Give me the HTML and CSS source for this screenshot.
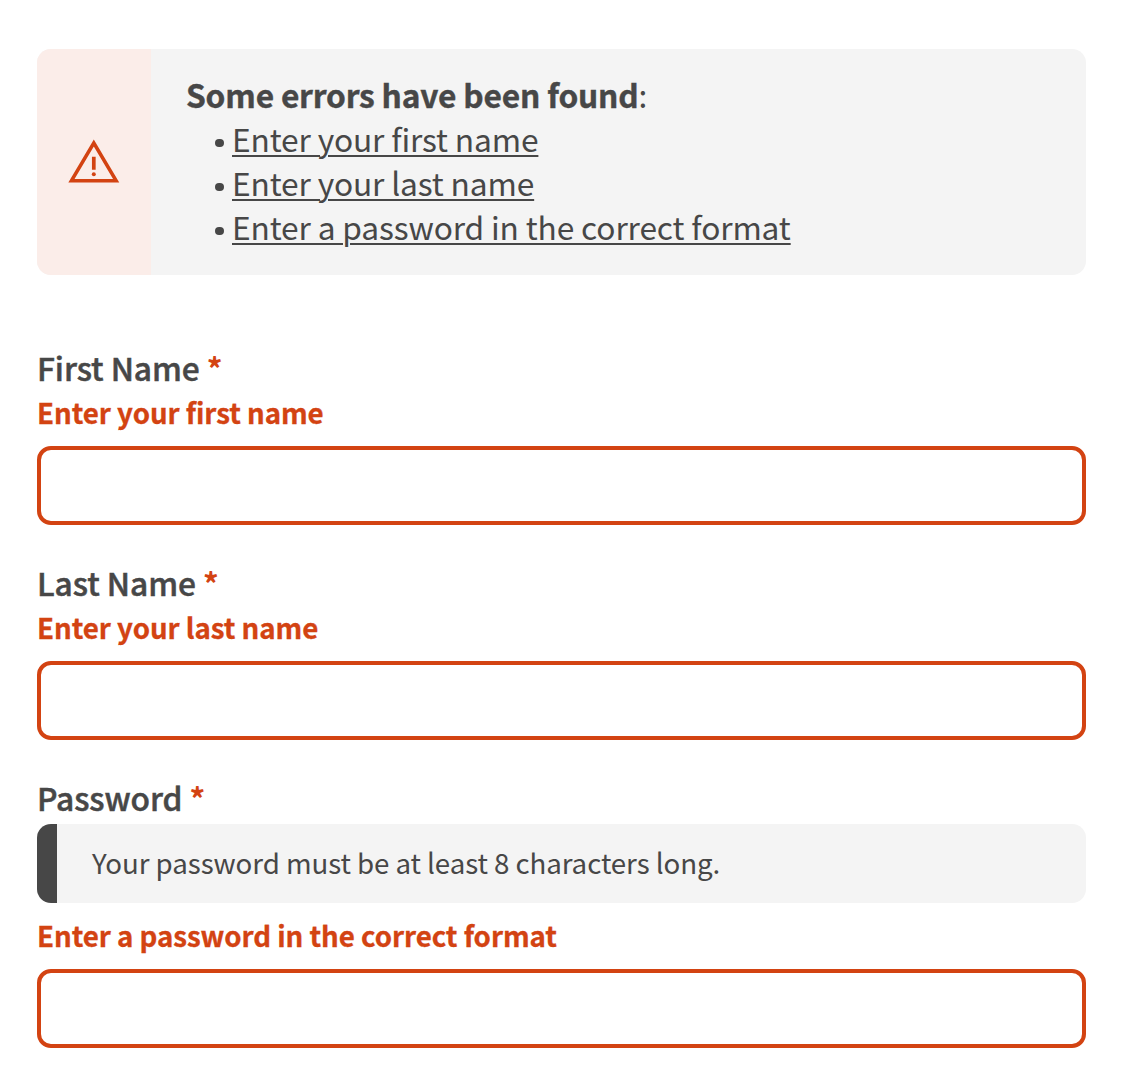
FILE: index.html
```
<!DOCTYPE html>
<html lang="en">
<head>
<meta charset="utf-8">
<title>Form errors</title>
<link rel="stylesheet" href="styles.css">
</head>
<body>
<main class="page">
  <section class="alert" role="alert">
    <div class="alert-icon">
      <svg width="52" height="46" viewBox="0 0 52 46" fill="none" aria-hidden="true">
        <path d="M25.8 4 48.2 41.8H3.4Z" stroke="currentColor" stroke-width="3.5"/>
        <path d="M25.8 17.8v13" stroke="currentColor" stroke-width="3.7"/>
        <circle cx="25.8" cy="35.3" r="2" fill="currentColor"/>
      </svg>
    </div>
    <div class="alert-body">
      <p class="alert-title"><strong>Some errors have been found</strong>:</p>
      <ul class="alert-list">
        <li><a href="#first">Enter your first name</a></li>
        <li><a href="#last">Enter your last name</a></li>
        <li><a href="#password">Enter a password in the correct format</a></li>
      </ul>
    </div>
  </section>
  <form class="form">
    <div class="field">
      <label class="label" for="first">First Name <span class="required">*</span></label>
      <p class="error">Enter your first name</p>
      <input class="input" id="first" type="text">
    </div>
    <div class="field">
      <label class="label" for="last">Last Name <span class="required">*</span></label>
      <p class="error">Enter your last name</p>
      <input class="input" id="last" type="text">
    </div>
    <div class="field">
      <label class="label" for="password">Password <span class="required">*</span></label>
      <p class="hint">Your password must be at least 8 characters long.</p>
      <p class="error">Enter a password in the correct format</p>
      <input class="input" id="password" type="password">
    </div>
  </form>
</main>
</body>
</html>
```
FILE: styles.css
```
* { box-sizing: border-box; margin: 0; padding: 0; }
body {
  background: #fff;
  color: #474747;
  font-family: "Noto Sans CJK SC", "Noto Sans", sans-serif;
  font-size: 31.7px;
  line-height: 44px;
  letter-spacing: -0.004em;
}
.page { padding: 49px 52px 38px 37px; }
.alert {
  display: flex;
  height: 226px;
  border-radius: 14px;
  overflow: hidden;
  background: #f4f4f4;
}
.alert-icon {
  display: flex;
  align-items: center;
  justify-content: center;
  width: 114px;
  background: #fbede9;
  color: #d34312;
}
.alert-body { padding: 23px 0 0 35px; }
.alert-title { letter-spacing: -0.0055em; }
.alert-title strong { -webkit-text-stroke: 0.4px currentColor; }
.alert-list { list-style: none; padding-left: 29px; }
.alert-list li { display: flex; align-items: center; }
.alert-list li::before {
  content: "";
  width: 8.5px;
  height: 8.5px;
  margin: 10px 8.5px 0 0;
  border-radius: 50%;
  background: currentColor;
}
.alert-list a { color: inherit; text-underline-offset: 3px; text-decoration-thickness: 2px; }
.form { padding-top: 70px; }
.field + .field { margin-top: 35px; }
.label {
  display: block;
  height: 46px;
  font-weight: 500;
  letter-spacing: -0.002em;
  -webkit-text-stroke: 0.5px currentColor;
}
.required { color: #d34312; font-weight: 700; font-size: 31px; -webkit-text-stroke: 0; }
.error {
  height: 55px;
  color: #d34312;
  font-size: 27.7px;
  font-weight: 700;
  line-height: 43px;
  letter-spacing: -0.002em;
  -webkit-text-stroke: 0.3px currentColor;
}
.hint {
  height: 79px;
  margin: 3px 0 11px;
  padding: 16px 0 0 35px;
  border-left: 20px solid #474747;
  border-radius: 14px;
  background: #f4f4f4;
  font-size: 27.7px;
  letter-spacing: -0.0025em;
}
.input {
  display: block;
  width: 100%;
  height: 79px;
  border: 4px solid #d34312;
  border-radius: 14px;
  background: #fff;
}
```
